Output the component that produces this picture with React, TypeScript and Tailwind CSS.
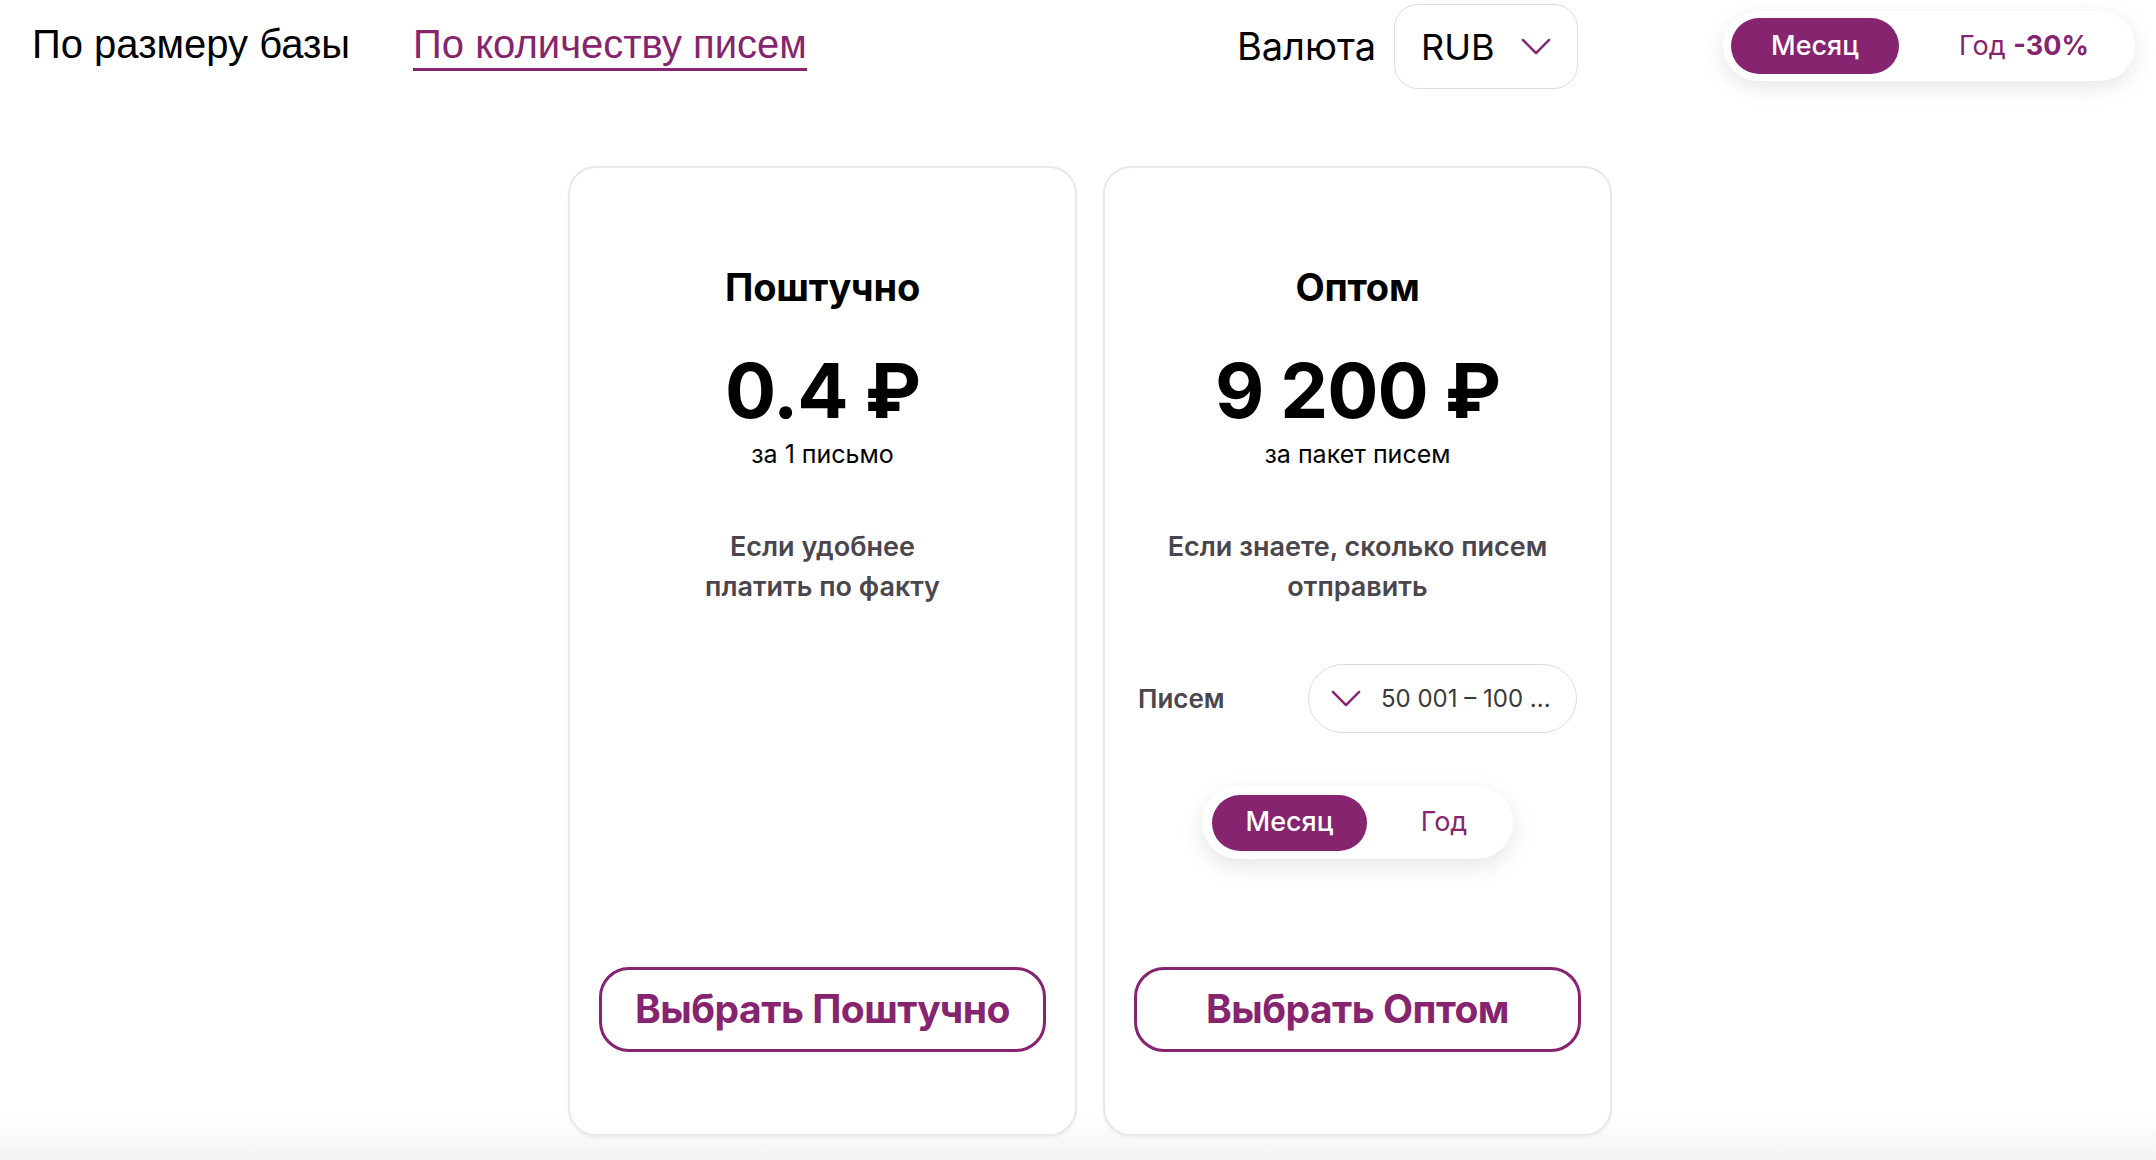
import React, { useState } from "react";

const font = { fontFamily: "Inter, 'Noto Sans', sans-serif" };
const tabFont = { fontFamily: "'Liberation Sans', Arial, sans-serif" };

function Chevron({ className = "" }: { className?: string }) {
  return (
    <svg viewBox="0 0 32 18" className={className} fill="none">
      <polyline points="2,2 16,16 30,2" stroke="#862470" strokeWidth="2.6" strokeLinecap="round" strokeLinejoin="round" />
    </svg>
  );
}

function PeriodToggle({ big }: { big?: boolean }) {
  const [period, setPeriod] = useState("month");
  return (
    <div
      className={
        big
          ? "flex items-center w-[412px] h-[70px] px-[8px] rounded-full bg-white shadow-[0_6px_22px_rgba(0,0,0,0.10)]"
          : "flex items-center w-[311px] h-[73px] px-[10px] rounded-full bg-white shadow-[0_8px_24px_rgba(0,0,0,0.10)]"
      }
    >
      <button
        onClick={() => setPeriod("month")}
        className={
          (big ? "w-[168px] h-[56px] " : "w-[155px] h-[56px] ") +
          "rounded-full text-[27px] font-medium " +
          (period === "month" ? "bg-[#862470] text-white" : "text-[#862470]")
        }
      >
        Месяц
      </button>
      <button
        onClick={() => setPeriod("year")}
        className={
          "flex-1 h-[56px] rounded-full text-[27px] " +
          (period === "year" ? "bg-[#862470] text-white" : "text-[#862470]")
        }
      >
        {big ? (
          <span className="pl-[22px]">
            Год <span className="font-bold">-30%</span>
          </span>
        ) : (
          <span className="pl-[18px]">Год</span>
        )}
      </button>
    </div>
  );
}

function Card({
  title,
  price,
  unit,
  desc,
  button,
  children,
}: {
  title: string;
  price: string;
  unit: string;
  desc: React.ReactNode;
  button: string;
  children?: React.ReactNode;
}) {
  return (
    <div className="w-[509px] h-[970px] flex flex-col items-center px-[29px] pt-[96px] pb-[82px] bg-white border-2 border-[#e8e8e8] rounded-[28px] shadow-[0_2px_3px_rgba(0,0,0,0.05)]">
      <h2 className="text-[38px] leading-[46px] font-bold text-black tracking-[-0.2px]">{title}</h2>
      <div className="mt-[40px] text-[76px] leading-[80px] font-bold text-black tracking-[-1px]">{price}</div>
      <div className="mt-[8px] text-[25px] leading-[32px] text-black">{unit}</div>
      <p className="mt-[57px] text-[27px] leading-[40px] font-semibold text-[#4b464e] text-center">{desc}</p>
      {children}
      <button className="mt-auto w-full h-[85px] rounded-[30px] border-[3px] border-[#862470] text-[39px] font-bold text-[#862470] tracking-[-0.5px]">
        {button}
      </button>
    </div>
  );
}

export default function App() {
  const [tab, setTab] = useState("count");
  return (
    <div
      style={font}
      className="w-[2156px] min-h-[1160px] bg-[linear-gradient(to_bottom,#ffffff_1115px,#f3f3f3_1160px)] overflow-hidden"
    >
      <header className="flex items-start pl-[32px] pr-[21px] pt-[4px]">
        <nav style={tabFont} className="flex items-start gap-[63px] pt-[16px]">
          <button
            onClick={() => setTab("size")}
            className={
              "text-[40px] leading-[48px] border-b-[3px] " +
              (tab === "size" ? "text-[#862470] border-[#862470]" : "text-black border-transparent")
            }
          >
            По размеру базы
          </button>
          <button
            onClick={() => setTab("count")}
            className={
              "text-[40px] leading-[48px] border-b-[3px] " +
              (tab === "count" ? "text-[#862470] border-[#862470]" : "text-black border-transparent")
            }
          >
            По количеству писем
          </button>
        </nav>
        <div className="ml-auto flex items-center gap-[18px] h-[85px]">
          <span className="text-[38px] text-black">Валюта</span>
          <button className="flex items-center gap-[26px] w-[184px] h-[85px] pl-[26px] rounded-[24px] border border-[#dddddd] bg-white">
            <span className="text-[36px] text-black">RUB</span>
            <Chevron className="w-[30px] h-[17px]" />
          </button>
        </div>
        <div className="ml-[145px] mt-[7px]">
          <PeriodToggle big />
        </div>
      </header>

      <main className="flex justify-center gap-[26px] pl-[24px] mt-[77px]">
        <Card
          title="Поштучно"
          price="0.4 ₽"
          unit="за 1 письмо"
          desc={
            <>
              Если удобнее
              <br />
              платить по факту
            </>
          }
          button="Выбрать Поштучно"
        />
        <Card
          title="Оптом"
          price="9 200 ₽"
          unit="за пакет писем"
          desc={
            <>
              Если знаете, сколько писем
              <br />
              отправить
            </>
          }
          button="Выбрать Оптом"
        >
          <div className="mt-[57px] w-full flex items-center justify-between pl-[4px] pr-[4px]">
            <span className="text-[26px] font-semibold text-[#4b464e]">Писем</span>
            <button className="flex items-center gap-[20px] w-[269px] h-[69px] pl-[22px] rounded-full border border-[#dcdcdc] bg-white">
              <Chevron className="w-[30px] h-[17px]" />
              <span className="text-[24px] text-[#3a3a3a] whitespace-nowrap">50 001 – 100 ...</span>
            </button>
          </div>
          <div className="mt-[53px]">
            <PeriodToggle />
          </div>
        </Card>
      </main>
    </div>
  );
}
